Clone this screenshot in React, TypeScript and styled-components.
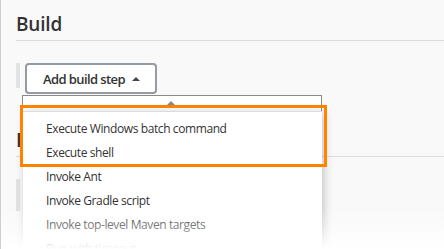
import React from "react";
import styled, { createGlobalStyle } from "styled-components";

const GlobalStyle = createGlobalStyle`
  html, body {
    margin: 0;
    padding: 0;
    background: #f9f9f9;
  }
  body {
    font-family: "Open Sans", "Noto Sans", sans-serif;
    color: #333;
  }
`;

const Page = styled.div`
  position: relative;
  height: 249px;
  overflow: hidden;
  box-sizing: border-box;
  border-left: 1px solid #cfcfcf;
  padding-left: 15px;
  background: #f9f9f9;
`;

const Section = styled.section<{ $top: number }>`
  padding-top: ${(p) => p.$top}px;
`;

const SectionTitle = styled.h2`
  margin: 0;
  padding-bottom: 4px;
  border-bottom: 1px solid #dcdcdc;
  font-size: 19px;
  line-height: 24px;
  font-weight: 600;
  letter-spacing: -0.2px;
  color: #333;
`;

const Toolbar = styled.div`
  display: flex;
  align-items: flex-start;
  gap: 5px;
  margin-top: 22px;
`;

const Strip = styled.div<{ $tall?: boolean }>`
  width: 4px;
  height: ${(p) => (p.$tall ? 32 : 25)}px;
  background: #e3e3e3;
`;

const StepButton = styled.button`
  display: flex;
  align-items: center;
  gap: 7px;
  box-sizing: border-box;
  width: 132px;
  height: 31px;
  padding: 0 0 0 16px;
  border: 2px solid #959ba2;
  border-radius: 4px;
  background: #fff;
  font-family: "Open Sans", sans-serif;
  font-size: 13px;
  font-weight: 600;
  letter-spacing: -0.6px;
  color: #333;
`;

const Caret = styled.span`
  width: 0;
  height: 0;
  border-left: 4px solid transparent;
  border-right: 4px solid transparent;
  border-bottom: 4px solid #444;
`;

const MenuFrame = styled.div`
  position: absolute;
  left: 21px;
  top: 95px;
  width: 300px;
  height: 16px;
  box-sizing: border-box;
  border: 1px solid #8a8a8a;
  border-bottom: none;
  background: #fff;
  display: flex;
  justify-content: center;
  padding-top: 5px;
`;

const ScrollCaret = styled.span`
  margin-left: -3px;
  width: 0;
  height: 0;
  border-left: 4px solid transparent;
  border-right: 4px solid transparent;
  border-bottom: 4px solid #8a8a8a;
`;

const Menu = styled.ul`
  position: absolute;
  left: 22px;
  top: 111px;
  width: 299px;
  margin: 0;
  padding: 5px 0 20px;
  list-style: none;
  background: #fff;
  border-top: 1px solid #dcdcdc;
  box-shadow: 2px 2px 9px rgba(0, 0, 0, 0.22);
`;

const MenuItem = styled.li`
  height: 24px;
  line-height: 24px;
  padding-left: 23px;
  font-size: 12px;
  letter-spacing: -0.4px;
  color: #333;
  white-space: nowrap;
`;

const Highlight = styled.div`
  position: absolute;
  left: 19px;
  top: 105px;
  width: 307px;
  height: 62px;
  box-sizing: border-box;
  border: 3px solid #ff8300;
  pointer-events: none;
`;

const Fade = styled.div`
  position: absolute;
  left: 0;
  right: 0;
  bottom: 0;
  height: 42px;
  background: linear-gradient(
    to bottom,
    rgba(255, 255, 255, 0) 0%,
    rgba(255, 255, 255, 0.4) 50%,
    rgba(255, 255, 255, 1) 100%
  );
  pointer-events: none;
`;

const items = [
  "Execute Windows batch command",
  "Execute shell",
  "Invoke Ant",
  "Invoke Gradle script",
  "Invoke top-level Maven targets",
  "Run with timeout",
];

const App = () => {
  return (
    <>
      <GlobalStyle />
      <Page>
        <Section $top={12}>
          <SectionTitle>Build</SectionTitle>
          <Toolbar>
            <Strip />
            <StepButton>
              Add build step
              <Caret />
            </StepButton>
          </Toolbar>
        </Section>
        <Section $top={34}>
          <SectionTitle>Post-build Actions</SectionTitle>
          <Toolbar>
            <Strip $tall />
          </Toolbar>
        </Section>

        <MenuFrame>
          <ScrollCaret />
        </MenuFrame>
        <Menu>
          {items.map((item) => (
            <MenuItem key={item}>{item}</MenuItem>
          ))}
        </Menu>
        <Highlight />
        <Fade />
      </Page>
    </>
  );
};

export default App;
